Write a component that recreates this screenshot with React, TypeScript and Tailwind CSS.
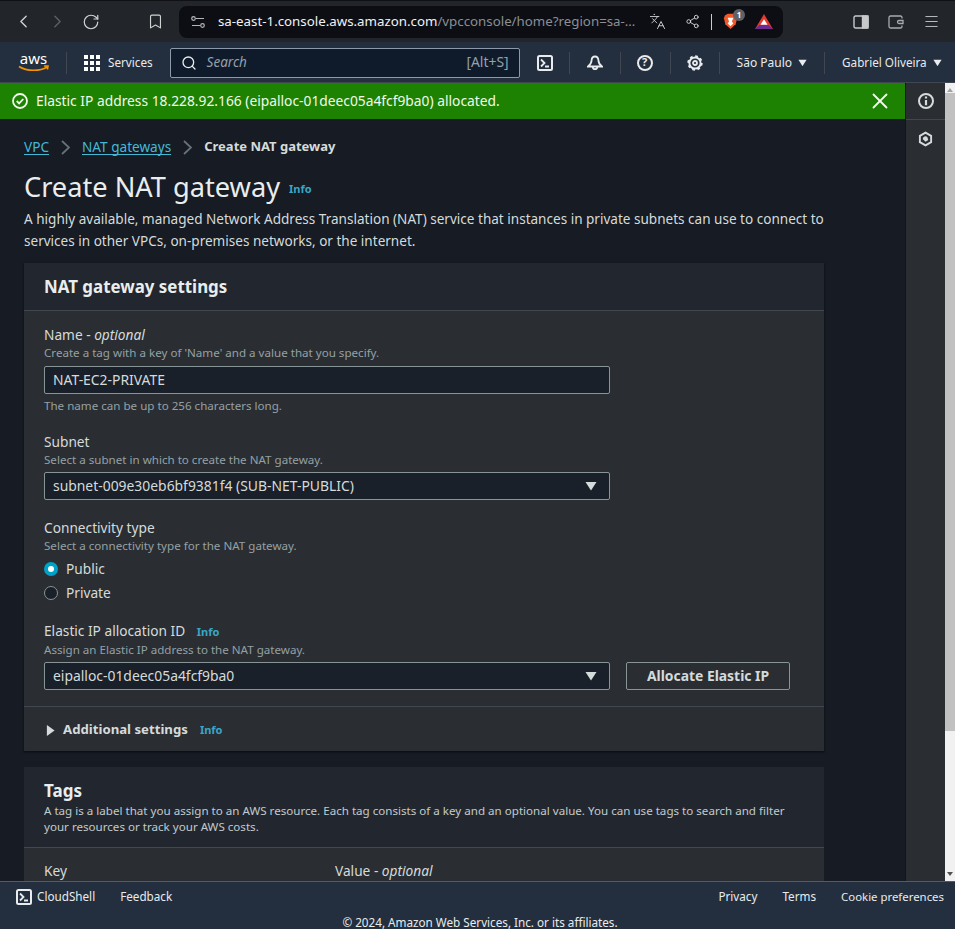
import { Bookmark, ChevronLeft, ChevronRight, Languages, Menu, RotateCw, Search, Share2, X } from "lucide-react"

const sans = "font-['Noto_Sans',sans-serif]"

const Caret = ({ className = "" }: { className?: string }) => (
  <svg viewBox="0 0 12 10" className={className} fill="currentColor">
    <path d="M0.5 1h11L6 9.5z" />
  </svg>
)

const ShellIcon = ({ size = 16 }: { size?: number }) => (
  <svg viewBox="0 0 16 16" width={size} height={size} fill="none" stroke="currentColor" strokeWidth="2">
    <rect x="1" y="1" width="14" height="14" rx="1.5" />
    <path d="M4 4.5 7.5 8 4 11.5M8 11.5h4" strokeWidth="1.8" />
  </svg>
)

const BellIcon = () => (
  <svg viewBox="0 0 16 16" width={16} height={16} fill="none" stroke="currentColor" strokeWidth="1.8">
    <path d="M8 1.5c-2.3 0-3.3 1.8-3.4 3.8C4.500 8 3.200 10 1 11.500h14C12.800 10 11.500 8 11.400 5.300 11.300 3.300 10.300 1.500 8 1.500z" />
    <path d="M5.800 12a2.200 2.200 0 0 0 4.400 0" />
  </svg>
)

const GearIcon = () => (
  <svg viewBox="0 0 16 16" width={16} height={16} fill="none" stroke="currentColor">
    <circle cx="8" cy="8" r="5.600" strokeWidth="2" />
    <circle cx="8" cy="8" r="6.800" strokeWidth="1.800" strokeDasharray="2.700 2.640" />
    <circle cx="8" cy="8" r="2" strokeWidth="1.800" />
  </svg>
)

const NavDivider = ({ className = "" }: { className?: string }) => <div className={`h-[22px] w-px shrink-0 bg-[#414750] ${className}`} />

const Info = ({ className = "" }: { className?: string }) => (
  <span className={`text-[11px] font-bold text-[#3aa6c7] ${className}`}>Info</span>
)

const Crumb = ({ className = "" }: { className?: string }) => (
  <svg viewBox="0 0 9 15" width={9} height={15} fill="none" stroke="#687078" strokeWidth="1.800" className={className}>
    <path d="M1 1l7 6.500-7 6.500" />
  </svg>
)

const BrowserBar = () => (
  <div className="flex h-[42px] shrink-0 items-center border-t border-[#0f1115] bg-[#22262a] text-[#d0d2d4]">
    <ChevronLeft size={21} strokeWidth={1.6} className="ml-[13px]" />
    <ChevronRight size={21} strokeWidth={1.6} className="ml-[13px] text-[#5e6266]" />
    <RotateCw size={18} strokeWidth={1.6} className="ml-[14px]" />
    <Bookmark size={17} strokeWidth={1.6} className="ml-[47px]" />
    <div className="ml-[15px] flex h-8 w-[604px] items-center rounded-lg bg-[#0d0e13] pl-3">
      <svg viewBox="0 0 14 12" width={14} height={12} fill="none" stroke="#b3b5b8" strokeWidth="1.200">
        <circle cx="2.500" cy="2.500" r="1.800" />
        <path d="M5 2.500h8M1 9.500h8" />
        <circle cx="11.500" cy="9.500" r="1.800" />
      </svg>
      <div className="ml-[13px] w-[415px] whitespace-nowrap text-[13.3px] text-[#f1f2f3]">
        sa-east-1.console.aws.amazon.com<span className="text-[#8b8e93]">/vpcconsole/home?region=sa-…</span>
      </div>
      <Languages size={17} strokeWidth={1.300} className="ml-[16px]" />
      <Share2 size={15} strokeWidth={1.5} className="ml-[19px]" />
      <div className="ml-[11px] h-4 w-px bg-[#c9cbce]" />
      <div className="relative ml-[11px]">
        <svg viewBox="0 0 16 18" width={15} height={17}>
          <path d="M2 2.500 5 .8h6l3 1.700 1 3-1.500 6.500L8 17l-5.500-5L1 5.500z" fill="#f1592b" />
          <path d="M5 5h6l-1.500 4L11 11l-3 3-3-3 1.500-2z" fill="#fff" />
        </svg>
        <span className="absolute -right-[7px] -top-[4px] flex h-3 w-3 items-center justify-center rounded-full bg-[#5e6168] text-[8px] font-bold text-white">
          1
        </span>
      </div>
      <svg viewBox="0 0 20 18" width={18} height={16} className="ml-[17px]">
        <path d="M10 0 20 17H0z" fill="#e8392f" />
        <path d="M0 17 5 12h10l5 5z" fill="#6a2c8e" />
        <path d="M10 6l4 6H6z" fill="#fff" />
      </svg>
    </div>
    <div className="ml-auto flex items-center gap-[19px] pr-[15px]">
      <svg viewBox="0 0 16 14" width={16} height={14} fill="none" stroke="#c7c9cb" strokeWidth="1.4">
        <rect x="1" y="1" width="14" height="12" rx="1.5" />
        <rect x="9.500" y="1" width="5.500" height="12" fill="#c7c9cb" />
      </svg>
      <svg viewBox="0 0 16 14" width={16} height={14} fill="none" stroke="#a9abae" strokeWidth="1.3">
        <path d="M14 3.500V2.500A1.500 1.500 0 0 0 12.500 1h-10A1.500 1.500 0 0 0 1 2.500v9A1.500 1.500 0 0 0 2.500 13h10a1.500 1.500 0 0 0 1.500-1.500v-1" />
        <path d="M15 5.500h-4a1.500 1.500 0 0 0 0 3h4z" />
      </svg>
      <Menu size={17} strokeWidth={1.3} className="text-[#c7c9cb]" />
    </div>
  </div>
)

const AwsNav = () => (
  <div className="flex h-[41px] shrink-0 items-center border-b border-[#414750] bg-[#232f3e] pt-px text-[#e9ebed]">
    <div className="ml-[18px] flex w-[31px] flex-col items-center">
      <span className="text-[15px] leading-[13px] text-white">aws</span>
      <svg viewBox="0 0 32 8" width={32} height={8} fill="none" stroke="#f79400" strokeWidth="1.6">
        <path d="M1 1.500c8 5 21 5 28 .5M26 1h4l-.5 3.500" />
      </svg>
    </div>
    <NavDivider className="ml-[17px]" />
    <div className="ml-[17px] grid grid-cols-3 gap-[2px]">
      {Array.from({ length: 9 }).map((_, i) => (
        <span key={i} className="h-[4px] w-[4px] bg-white" />
      ))}
    </div>
    <span className="ml-2 text-[11.7px]">Services</span>
    <div className="ml-[17px] flex h-[30px] w-[350px] shrink-0 items-center rounded-[2px] border border-[#8d99a8] bg-[#0f1b2a] px-[10px]">
      <Search size={16} strokeWidth={2} className="text-[#e9ebed]" />
      <span className="ml-[10px] text-[13.5px] italic text-[#95a0ac]">Search</span>
      <span className="ml-auto text-[13.9px] text-[#95a0ac]">[Alt+S]</span>
    </div>
    <div className="ml-[17px]">
      <ShellIcon />
    </div>
    <NavDivider className="ml-4" />
    <div className="ml-[17px]">
      <BellIcon />
    </div>
    <NavDivider className="ml-[17px]" />
    <div className="ml-4 flex h-4 w-4 items-center justify-center rounded-full border-2 border-[#e9ebed] text-[11px] font-bold">?</div>
    <NavDivider className="ml-[17px]" />
    <div className="ml-4">
      <GearIcon />
    </div>
    <NavDivider className="ml-4" />
    <span className="ml-[17px] whitespace-nowrap text-[12px]">São Paulo</span>
    <Caret className="ml-[6px] w-[9px] shrink-0" />
    <NavDivider className="ml-[17px]" />
    <span className="ml-[17px] whitespace-nowrap text-[11.7px]">Gabriel Oliveira</span>
    <Caret className="ml-[6px] w-[9px] shrink-0" />
  </div>
)

const SideRail = () => (
  <div className="flex w-[40px] shrink-0 flex-col border-l border-[#12151b] bg-[#2a2e33] text-[#d5dbdb]">
    <div className="flex h-[37px] items-center justify-center border-b border-[#414750]">
      <svg viewBox="0 0 16 16" width={16} height={16}>
        <circle cx="8" cy="8" r="7" fill="none" stroke="currentColor" strokeWidth="2" />
        <path d="M8 3.500v2M8 7v5.200" stroke="currentColor" strokeWidth="2.200" />
      </svg>
    </div>
    <div className="flex h-[38px] items-center justify-center">
      <svg viewBox="0 0 16 16" width={15} height={16} fill="none" stroke="currentColor" strokeWidth="2">
        <path d="M8 1.200 14 4.600v6.800l-6 3.400-6-3.400V4.600z" />
        <path d="M5 8a3 3 0 0 1 5-2l1 3-3 2z" fill="currentColor" stroke="none" />
      </svg>
    </div>
  </div>
)

const ScrollBar = () => (
  <div className="flex w-[10px] shrink-0 flex-col items-center bg-[#f1f1f1]">
    <div className="mt-[5px] h-0 w-0 border-x-[3px] border-b-[4px] border-x-transparent border-b-[#a3a3a3]" />
    <div className="mt-[1px] h-[638px] w-full bg-[#c1c1c1]" />
    <div className="mt-auto mb-[5px] h-0 w-0 border-x-[3px] border-t-[4px] border-x-transparent border-t-[#505050]" />
  </div>
)

const FieldLabel = ({ title, hint }: { title: React.ReactNode; hint: string }) => (
  <>
    <div className="text-[13.7px] leading-[22px] text-[#d5dbdb]">{title}</div>
    <div className="text-[11.6px] leading-[14px] text-[#95a0a4]">{hint}</div>
  </>
)

const Select = ({ value }: { value: string }) => (
  <div className="flex h-[28px] w-[566px] items-center justify-between rounded-[2px] border border-[#879596] bg-[#1a2029] pl-2 pr-3 text-[13.9px] text-[#d5dbdb]">
    {value}
    <Caret className="w-[12px] text-[#d5dbdb]" />
  </div>
)

const Radio = ({ label, checked }: { label: string; checked?: boolean }) => (
  <div className="flex h-[24px] items-center text-[13.7px] text-[#d5dbdb]">
    {checked ? (
      <span className="flex h-[14px] w-[14px] items-center justify-center rounded-full bg-[#00a1c9]">
        <span className="h-[6px] w-[6px] rounded-full bg-white" />
      </span>
    ) : (
      <span className="h-[14px] w-[14px] rounded-full border border-[#879596] bg-[#1a2029]" />
    )}
    <span className="ml-2">{label}</span>
  </div>
)

const SettingsPanel = () => (
  <section className="mt-[11px] w-[800px] shadow-[0_1px_2px_#0b0d11]">
    <div className="flex h-[48px] items-center border-b border-[#414750] bg-[#22272f] px-5 text-[16.9px] font-bold text-[#eaeded]">
      NAT gateway settings
    </div>
    <div className="bg-[#2a2e33] px-5 pt-[13px] pb-4">
      <FieldLabel title={<>Name - <i>optional</i></>} hint="Create a tag with a key of 'Name' and a value that you specify." />
      <div className="mt-[6px] flex h-[28px] w-[566px] items-center rounded-[2px] border border-[#879596] bg-[#1a2029] pl-2 text-[13.9px] text-[#d5dbdb]">
        NAT-EC2-PRIVATE
      </div>
      <div className="mt-[4px] text-[11.6px] leading-[16px] text-[#95a0a4]">The name can be up to 256 characters long.</div>

      <div className="mt-[17px]">
        <FieldLabel title="Subnet" hint="Select a subnet in which to create the NAT gateway." />
      </div>
      <div className="mt-[5px]">
        <Select value="subnet-009e30eb6bf9381f4 (SUB-NET-PUBLIC)" />
      </div>

      <div className="mt-[17px]">
        <FieldLabel title="Connectivity type" hint="Select a connectivity type for the NAT gateway." />
      </div>
      <div className="mt-[4px]">
        <Radio label="Public" checked />
        <Radio label="Private" />
      </div>

      <div className="mt-[15px]">
        <FieldLabel title={<>Elastic IP allocation ID <Info className="ml-2" /></>} hint="Assign an Elastic IP address to the NAT gateway." />
      </div>
      <div className="mt-[5px] flex items-center gap-4">
        <Select value="eipalloc-01deec05a4fcf9ba0" />
        <div className="flex h-[28px] w-[164px] items-center justify-center rounded-[2px] border border-[#879596] text-[13.9px] font-bold text-[#d5dbdb]">
          Allocate Elastic IP
        </div>
      </div>
    </div>
    <div className="flex h-[45px] items-center border-t border-[#414750] bg-[#2a2e33] pl-[22px] pt-[2px]">
      <svg viewBox="0 0 10 12" width={9} height={11} fill="#d5dbdb">
        <path d="M1 0l8.500 6L1 12z" />
      </svg>
      <span className="ml-2 text-[13.2px] font-bold text-[#d5dbdb]">Additional settings</span>
      <Info className="ml-3" />
    </div>
  </section>
)

const TagsPanel = () => (
  <section className="mt-4 w-[800px]">
    <div className="h-[81px] border-b border-[#414750] bg-[#22272f] px-5 pt-3">
      <div className="text-[17px] font-bold leading-[24px] text-[#eaeded]">Tags</div>
      <p className="text-[11.6px] leading-[16px] text-[#c3cacb]">
        A tag is a label that you assign to an AWS resource. Each tag consists of a key and an optional value. You can use tags to search and filter your resources or track your AWS costs.
      </p>
    </div>
    <div className="flex h-[60px] bg-[#2a2e33] px-5 pt-[13px] text-[13.7px] leading-[20px] text-[#d5dbdb]">
      <span className="w-[291px]">Key</span>
      <span>Value - <i>optional</i></span>
    </div>
  </section>
)

export default function App() {
  return (
    <div className={`flex h-[929px] w-[955px] flex-col overflow-hidden ${sans}`}>
      <BrowserBar />
      <AwsNav />
      <div className="flex min-h-0 flex-1">
        <div className="flex min-w-0 flex-1 flex-col bg-[#161b24]">
          <div className="flex h-[36px] shrink-0 items-center bg-[#1d8102] pl-3 pr-3 text-[13.8px] text-[#f1faec]">
            <svg viewBox="0 0 16 16" width={16} height={16} fill="none" stroke="currentColor" strokeWidth="1.8">
              <circle cx="8" cy="8" r="7" />
              <path d="m4.700 8 2.400 2.400 4.200-4.400" />
            </svg>
            <span className="ml-2">Elastic IP address 18.228.92.166 (eipalloc-01deec05a4fcf9ba0) allocated.</span>
            <X size={26} strokeWidth={1.7} className="ml-auto" />
          </div>
          <main className="min-h-0 flex-1 overflow-hidden pl-6">
            <nav className="mt-[18px] flex h-5 items-center text-[13.6px]">
              <span className="border-b border-[#44b9d6] leading-[15px] text-[#44b9d6]">VPC</span>
              <Crumb className="ml-3" />
              <span className="ml-3 border-b border-[#44b9d6] leading-[15px] text-[#44b9d6]">NAT gateways</span>
              <Crumb className="ml-3" />
              <span className="ml-3 text-[13px] font-bold text-[#d5dbdb]">Create NAT gateway</span>
            </nav>
            <h1 className="mt-3 flex h-9 items-center text-[27.2px] font-normal text-[#eaeded]">
              Create NAT gateway
              <Info className="ml-[9px] mt-[5px]" />
            </h1>
            <p className="mt-[3px] w-[810px] text-[13.55px] leading-[22px] text-[#d5dbdb]">
              A highly available, managed Network Address Translation (NAT) service that instances in private subnets can use to connect to services in other VPCs, on-premises networks, or the internet.
            </p>
            <SettingsPanel />
            <TagsPanel />
          </main>
        </div>
        <SideRail />
        <ScrollBar />
      </div>
      <footer className="h-[48px] shrink-0 border-t border-[#545b64] bg-[#232f3e] text-[11.7px] text-[#e9ebed]">
        <div className="flex h-[30px] items-center pl-4 pr-[11px]">
          <ShellIcon />
          <span className="ml-[5px]">CloudShell</span>
          <span className="ml-[25px]">Feedback</span>
          <span className="ml-auto">Privacy</span>
          <span className="ml-[25px]">Terms</span>
          <span className="ml-[25px] text-[11.4px]">Cookie preferences</span>
        </div>
        <div className="mt-[3px] pl-[5px] text-center leading-[14px]">© 2024, Amazon Web Services, Inc. or its affiliates.</div>
      </footer>
    </div>
  )
}
